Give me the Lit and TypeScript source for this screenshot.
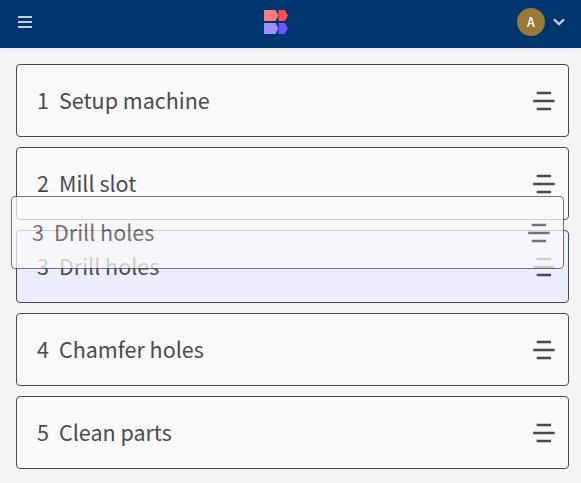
import { LitElement, html, css } from "lit";
import { customElement, property } from "lit/decorators.js";

@customElement("step-card")
class StepCard extends LitElement {
  @property() number = "";
  @property() label = "";

  static styles = css`
    :host {
      display: flex;
      align-items: center;
      box-sizing: border-box;
      width: 553px;
      height: 73px;
      padding: 0 13px 0 20px;
      border: 1px solid #4a4a4a;
      border-radius: 4px;
      background: #fafafa;
      color: #4a4a4a;
      font: 21.5px/32px "Noto Sans CJK SC", "Open Sans", sans-serif;
    }
    .number,
    .label {
      padding-bottom: 2px;
    }
    .number {
      width: 22px;
    }
    .label {
      flex: 1;
      white-space: nowrap;
    }
    .handle {
      display: block;
      width: 22px;
      height: 20px;
    }
  `;

  render() {
    return html`
      <span class="number">${this.number}</span>
      <span class="label">${this.label}</span>
      <svg class="handle" viewBox="0 0 22 20" stroke="#4a4a4a" stroke-width="2.5">
        <path d="M3.7 1.9h14.4M0.2 10h21.4M3.7 18.1h14.4" />
      </svg>
    `;
  }
}

@customElement("app-root")
class AppRoot extends LitElement {
  static styles = css`
    :host {
      display: block;
      position: relative;
      height: 483px;
      background: #f4f4f4;
      overflow: hidden;
    }
    .bar {
      display: flex;
      align-items: center;
      justify-content: space-between;
      box-sizing: border-box;
      height: 48px;
      padding: 0 16px 4px 18px;
      background: #003670;
      box-shadow: 0 1px 8px rgba(0, 0, 0, 0.06);
    }
    .menu {
      width: 16px;
      height: 14px;
    }
    .logo {
      width: 24px;
      height: 24px;
      margin-left: 1px;
    }
    .account {
      display: flex;
      align-items: center;
      gap: 8px;
    }
    .avatar {
      width: 28px;
      height: 28px;
      border-radius: 50%;
      background: #997838;
      color: #fff;
      font: 500 12.5px/28px "Noto Sans CJK SC", sans-serif;
      text-align: center;
    }
    .chevron {
      width: 12px;
      height: 8px;
    }
    .list {
      display: flex;
      flex-direction: column;
      gap: 10px;
      padding: 16px 12px 0 16px;
    }
    .source {
      background: #ecedff;
    }
    .dragged {
      position: absolute;
      left: 11px;
      top: 196px;
      opacity: 0.75;
    }
  `;

  private steps = ["Setup machine", "Mill slot", "Drill holes", "Chamfer holes", "Clean parts"];
  private dragging = 2;

  render() {
    return html`
      <header class="bar">
        <svg class="menu" viewBox="0 0 16 14" fill="#c4cfdc">
          <path d="M0 1h14v2H0zM0 6h14v2H0zM0 11h14v2H0z" />
        </svg>
        <svg class="logo" viewBox="0 0 24 24">
          <path fill="#ff7b7b" d="M0 0h11.5l3 5.5-3 5.5H0z" />
          <path fill="#ff4f50" d="M14.5 0h6.3L24 5.5 20.8 11h-6.3V6.8l.7-1.3-.7-1.3z" />
          <path fill="#9c90ff" d="M0 13h11.5l3 5.5-3 5.5H0z" />
          <path fill="#6558ff" d="M14.5 13h6.3l3.2 5.5-3.2 5.5h-6.3v-4.2l.7-1.3-.7-1.3z" />
        </svg>
        <div class="account">
          <div class="avatar">A</div>
          <svg class="chevron" viewBox="0 0 12 8" fill="none" stroke="#ccd7e2" stroke-width="2.3">
            <path d="M1 1.2l5 5 5-5" />
          </svg>
        </div>
      </header>
      <main class="list">
        ${this.steps.map(
          (label, i) => html`<step-card
            class=${i === this.dragging ? "source" : ""}
            .number=${String(i + 1)}
            .label=${label}
          ></step-card>`
        )}
      </main>
      <step-card
        class="dragged"
        .number=${String(this.dragging + 1)}
        .label=${this.steps[this.dragging]}
      ></step-card>
    `;
  }
}
